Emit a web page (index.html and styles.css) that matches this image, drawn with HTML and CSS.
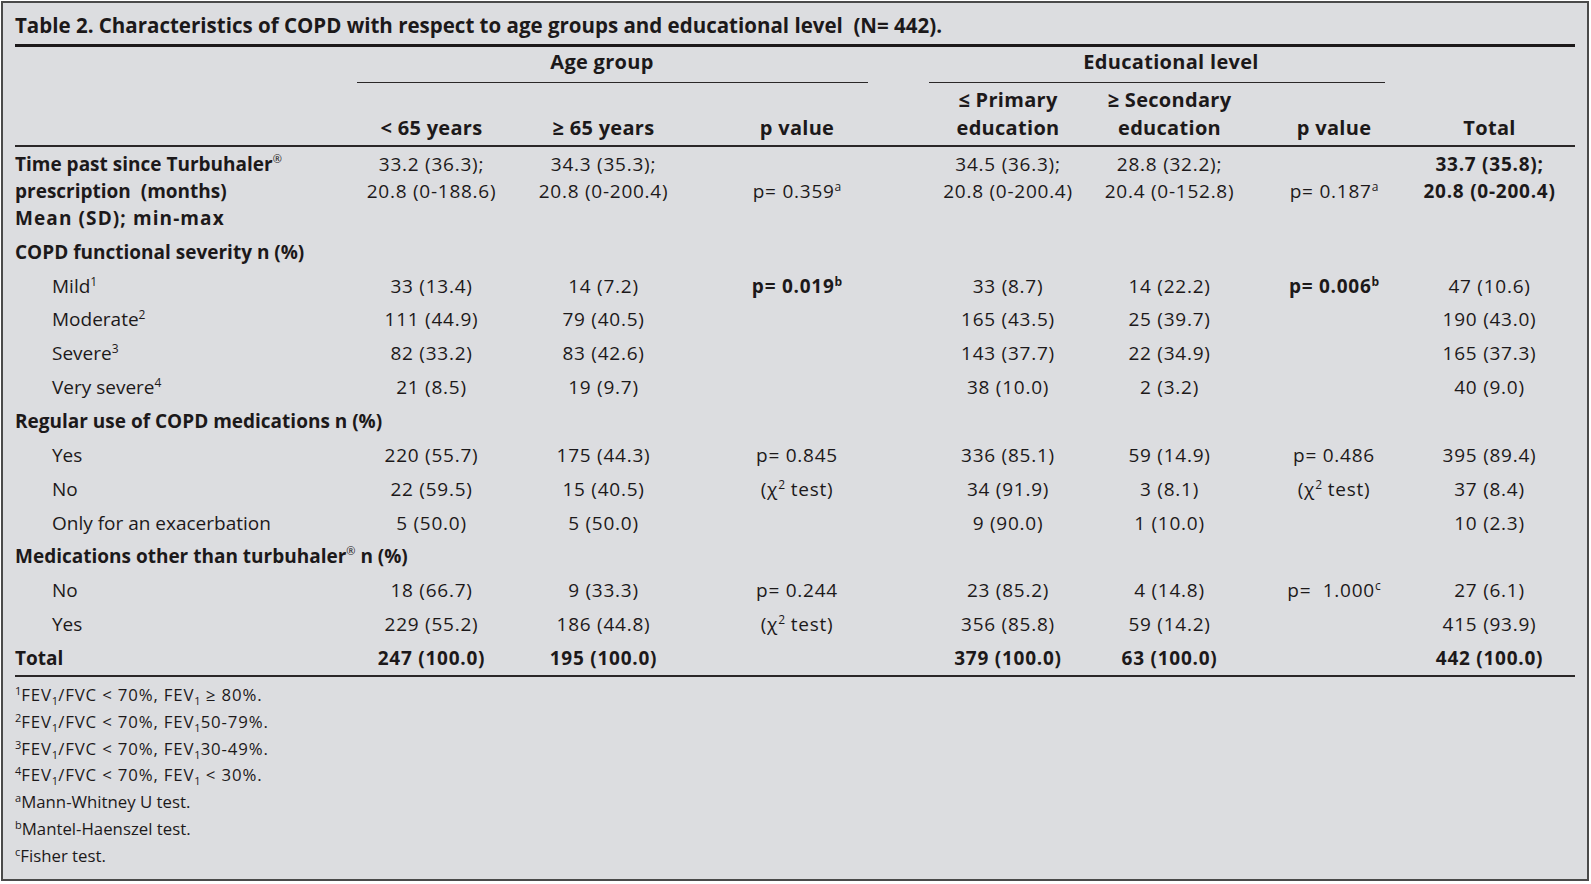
FILE: index.html
```html
<!DOCTYPE html>
<html>
<head>
<meta charset="utf-8">
<link rel="stylesheet" href="styles.css">
</head>
<body>
<div class="frame">
  <div class="title">Table 2. Characteristics of COPD with respect to age groups and educational level&nbsp; (N= 442).</div>
  <table class="t">
    <colgroup>
      <col class="c-lbl"><col class="c-a1"><col class="c-a2"><col class="c-p1"><col class="c-e1"><col class="c-e2"><col class="c-p2"><col class="c-tot">
    </colgroup>
    <thead>
      <tr class="grp-row">
        <th></th>
        <th colspan="3"><div class="grp grp-age">Age group</div></th>
        <th colspan="3"><div class="grp grp-edu">Educational level</div></th>
        <th></th>
      </tr>
      <tr class="col-row">
        <th></th>
        <th>&lt; 65 years</th>
        <th>&ge; 65 years</th>
        <th>p value</th>
        <th>&le; Primary<br>education</th>
        <th>&ge; Secondary<br>education</th>
        <th>p value</th>
        <th>Total</th>
      </tr>
    </thead>
    <tbody>
      <tr class="first-row">
        <td class="lbl b">Time past since Turbuhaler<sup class="reg">&reg;</sup><br>prescription&nbsp; (months)<br><span class="wide">Mean (SD); min-max</span></td>
        <td>33.2 (36.3);<br>20.8 (0-188.6)</td>
        <td>34.3 (35.3);<br>20.8 (0-200.4)</td>
        <td><br>p= 0.359<sup>a</sup></td>
        <td>34.5 (36.3);<br>20.8 (0-200.4)</td>
        <td>28.8 (32.2);<br>20.4 (0-152.8)</td>
        <td><br>p= 0.187<sup>a</sup></td>
        <td class="b">33.7 (35.8);<br>20.8 (0-200.4)</td>
      </tr>
      <tr>
        <td class="lbl b">COPD functional severity n (%)</td>
        <td></td><td></td><td></td><td></td><td></td><td></td><td></td>
      </tr>
      <tr>
        <td class="lbl sub">Mild<sup>1</sup></td>
        <td>33 (13.4)</td><td>14 (7.2)</td><td class="b">p= 0.019<sup>b</sup></td>
        <td>33 (8.7)</td><td>14 (22.2)</td><td class="b">p= 0.006<sup>b</sup></td><td>47 (10.6)</td>
      </tr>
      <tr>
        <td class="lbl sub">Moderate<sup>2</sup></td>
        <td>111 (44.9)</td><td>79 (40.5)</td><td></td>
        <td>165 (43.5)</td><td>25 (39.7)</td><td></td><td>190 (43.0)</td>
      </tr>
      <tr>
        <td class="lbl sub">Severe<sup>3</sup></td>
        <td>82 (33.2)</td><td>83 (42.6)</td><td></td>
        <td>143 (37.7)</td><td>22 (34.9)</td><td></td><td>165 (37.3)</td>
      </tr>
      <tr>
        <td class="lbl sub">Very severe<sup>4</sup></td>
        <td>21 (8.5)</td><td>19 (9.7)</td><td></td>
        <td>38 (10.0)</td><td>2 (3.2)</td><td></td><td>40 (9.0)</td>
      </tr>
      <tr>
        <td class="lbl b">Regular use of COPD medications n (%)</td>
        <td></td><td></td><td></td><td></td><td></td><td></td><td></td>
      </tr>
      <tr>
        <td class="lbl sub">Yes</td>
        <td>220 (55.7)</td><td>175 (44.3)</td><td>p= 0.845</td>
        <td>336 (85.1)</td><td>59 (14.9)</td><td>p= 0.486</td><td>395 (89.4)</td>
      </tr>
      <tr>
        <td class="lbl sub">No</td>
        <td>22 (59.5)</td><td>15 (40.5)</td><td>(&chi;<sup>2</sup> test)</td>
        <td>34 (91.9)</td><td>3 (8.1)</td><td>(&chi;<sup>2</sup> test)</td><td>37 (8.4)</td>
      </tr>
      <tr>
        <td class="lbl sub">Only for an exacerbation</td>
        <td>5 (50.0)</td><td>5 (50.0)</td><td></td>
        <td>9 (90.0)</td><td>1 (10.0)</td><td></td><td>10 (2.3)</td>
      </tr>
      <tr>
        <td class="lbl b">Medications other than turbuhaler<sup class="reg">&reg;</sup> n (%)</td>
        <td></td><td></td><td></td><td></td><td></td><td></td><td></td>
      </tr>
      <tr>
        <td class="lbl sub">No</td>
        <td>18 (66.7)</td><td>9 (33.3)</td><td>p= 0.244</td>
        <td>23 (85.2)</td><td>4 (14.8)</td><td>p=&nbsp; 1.000<sup>c</sup></td><td>27 (6.1)</td>
      </tr>
      <tr>
        <td class="lbl sub">Yes</td>
        <td>229 (55.2)</td><td>186 (44.8)</td><td>(&chi;<sup>2</sup> test)</td>
        <td>356 (85.8)</td><td>59 (14.2)</td><td></td><td>415 (93.9)</td>
      </tr>
      <tr class="total-row">
        <td class="lbl b">Total</td>
        <td class="b">247 (100.0)</td><td class="b">195 (100.0)</td><td></td>
        <td class="b">379 (100.0)</td><td class="b">63 (100.0)</td><td></td><td class="b">442 (100.0)</td>
      </tr>
    </tbody>
  </table>
  <div class="notes">
    <div class="num"><sup>1</sup>FEV<sub>1</sub>/FVC &lt; 70%, FEV<sub>1</sub> &ge; 80%.</div>
    <div class="num"><sup>2</sup>FEV<sub>1</sub>/FVC &lt; 70%, FEV<sub>1</sub>50-79%.</div>
    <div class="num"><sup>3</sup>FEV<sub>1</sub>/FVC &lt; 70%, FEV<sub>1</sub>30-49%.</div>
    <div class="num"><sup>4</sup>FEV<sub>1</sub>/FVC &lt; 70%, FEV<sub>1</sub> &lt; 30%.</div>
    <div><sup>a</sup>Mann-Whitney U test.</div>
    <div><sup>b</sup>Mantel-Haenszel test.</div>
    <div><sup>c</sup>Fisher test.</div>
  </div>
</div>
</body>
</html>
```

FILE: styles.css
```css
html, body {
  margin: 0;
  padding: 0;
  background: #ffffff;
}
body {
  font-family: "Open Sans", "Noto Sans", sans-serif;
  color: #1c191a;
}
.frame {
  margin: 1px 0 0 1px;
  width: 1560px;
  height: 867px;
  padding: 9px 12px 0 12px;
  border: 2px solid #4a4a4a;
  background: #dcdde0;
}
.title {
  font-size: 20.5px;
  font-weight: 700;
  line-height: 24px;
  padding: 1px 0 7px 0;
  border-bottom: 3px solid #1c191a;
}
.t {
  width: 1560px;
  border-collapse: collapse;
  table-layout: fixed;
  font-size: 19px;
}
.c-lbl { width: 331px; }
.c-a1 { width: 171px; }
.c-a2 { width: 182px; }
.c-p1 { width: 203px; }
.c-e1 { width: 188px; }
.c-e2 { width: 162px; }
.c-p2 { width: 159px; }
.c-tot { width: 164px; }

.t th, .t td {
  padding: 3.43px 0;
  line-height: 27px;
  text-align: center;
  vertical-align: top;
  white-space: nowrap;
}
.t td { letter-spacing: 0.75px; }
.t td.lbl { text-align: left; letter-spacing: 0; }
.t td.sub { padding-left: 37px; }
.t th {
  font-weight: 700;
  font-size: 20px;
  letter-spacing: 0.3px;
}
.b { font-weight: 700; }
.wide { letter-spacing: 1.1px; }

/* per-column horizontal offsets of the centred content */
.col-row th:nth-child(3), .t tbody td:nth-child(3) { padding-right: 9px; }
.col-row th:nth-child(4), .t tbody td:nth-child(4) { padding-right: 7px; }
.col-row th:nth-child(5), .t tbody td:nth-child(5) { padding-left: 24px; }
.col-row th:nth-child(6), .t tbody td:nth-child(6) { padding-right: 3px; }
.col-row th:nth-child(7), .t tbody td:nth-child(7) { padding-left: 5px; }
.col-row th:nth-child(8), .t tbody td:nth-child(8) { padding-right: 7px; }

.t tbody .first-row td { padding-top: 4.43px; }

.grp-row th {
  padding: 1px 0 0 0;
}
.grp {
  line-height: 27px;
  padding-bottom: 7px;
  border-bottom: 1.5px solid #2a2728;
}
.grp-age {
  margin: 0 34px 0 11px;
  padding-right: 21px;
}
.grp-edu {
  margin: 0 26px 0 27px;
  padding-left: 28px;
}
.col-row th {
  vertical-align: bottom;
  line-height: 28px;
  padding-top: 2.5px;
  padding-bottom: 3px;
  border-bottom: 2px solid #2a2728;
}
.total-row td {
  border-bottom: 2px solid #2a2728;
}
sup, sub {
  font-size: 12px;
  line-height: 0;
  letter-spacing: 0;
}
sup { vertical-align: 7px; }
sub { vertical-align: -4px; }
sup.reg { font-size: 11px; vertical-align: 8px; font-weight: 400; }

.notes {
  font-size: 16.8px;
  line-height: 26.9px;
  padding-top: 4.4px;
}
.notes .num { letter-spacing: 0.85px; }
.notes sup { font-size: 11px; vertical-align: 6px; }
.notes sub { font-size: 11px; vertical-align: -4px; }
```
